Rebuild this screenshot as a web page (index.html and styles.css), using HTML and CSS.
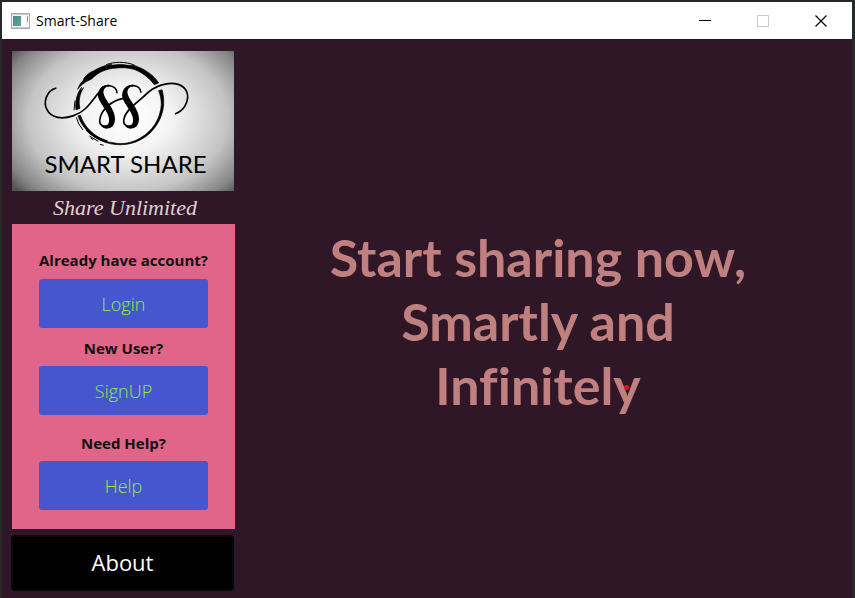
FILE: index.html
```html
<!DOCTYPE html>
<html lang="en">
<head>
<meta charset="utf-8">
<title>Smart-Share</title>
<link rel="stylesheet" href="styles.css">
</head>
<body>
<div class="window">
  <header class="titlebar">
    <svg class="app-icon" width="19" height="16" viewBox="0 0 19 16" aria-hidden="true">
      <defs><linearGradient id="pane" x1="0" y1="0" x2="1" y2="1"><stop offset="0" stop-color="#4584a0"/><stop offset="1" stop-color="#5fae7c"/></linearGradient></defs>
      <rect x=".5" y=".5" width="18" height="15" fill="#f4f5f7" stroke="#a9adb5"/>
      <path d="M1 1.5H18" stroke="#c5c9d2"/>
      <rect x="2" y="3" width="8" height="10" fill="url(#pane)"/>
      <rect x="11" y="3" width="4" height="10" fill="#fff"/>
      <path d="M16.5 3V9" stroke="#63b08d"/>
      <path d="M1 14.5H18" stroke="#c5c9d2"/>
    </svg>
    <span class="title">Smart-Share</span>
    <button class="control" aria-label="Minimize"><svg width="12" height="12" viewBox="0 0 12 12"><path d="M0 5.5H12" stroke="#000"/></svg></button>
    <button class="control" aria-label="Maximize" disabled><svg width="12" height="12" viewBox="0 0 12 12"><rect x=".5" y=".5" width="11" height="11" fill="none" stroke="#ccc"/></svg></button>
    <button class="control" aria-label="Close"><svg width="12" height="12" viewBox="0 0 12 12"><path d="M.5 .5L11.5 11.5M11.5 .5L.5 11.5" stroke="#000" stroke-width="1.2"/></svg></button>
  </header>
  <main class="content">
    <aside class="sidebar">
      <div class="logo">
        <svg class="emblem" viewBox="0 0 222 140" aria-hidden="true">
          <g transform="translate(28 4) scale(.3333)">
            <g fill="#000" stroke="#000" stroke-width="2">
              <path d="M113 103C117 92 122 83 129 77C133 65 145 54 160 48C175 38 195 31 216 27L205 33C220 29 246 27 264 31L285 32C315 42 343 62 356 84L343 89C329 70 309 53 285 44C263 37 243 37 220 40C200 42 178 51 162 65L155 72L141 79C128 86 120 94 113 103Z"/>
              <path d="M125 97C111 115 104 139 108 165L120 160C115 142 118 116 131 98L119 109Z"/>
              <path d="M114 183C126 217 151 241 181 256C220 275 268 273 302 254C340 235 368 193 371 149C372 132 370 117 366 104L356 107C361 119 364 134 364 149C361 193 336 229 301 249C277 263 248 269 225 264L205 261C164 246 135 219 121 181Z"/>
            </g>
            <g fill="none" stroke="#000">
              <path d="M198 29C224 20 254 19 283 30M105 137L102 166M109 187Q114 208 129 225M148 243L175 259M180 268L191 271M152 249L160 254" stroke-width="3"/>
              <path d="M134 75C160 47 205 32 253 33" stroke-width="8"/>
              <path d="M140 224Q165 250 202 260" stroke-width="7"/>
              <path d="M49 99C19 107 9 142 21 164C34 190 67 194 101 182C140 169 155 137 177 112" stroke-width="5"/>
              <path d="M231 115C230 87 190 84 178 110C171 130 193 146 204 160M210 207C200 221 174 213 180 191C184 166 214 136 251 130" stroke-width="5"/>
              <path d="M303 113C302 87 262 84 252 110C245 130 265 146 276 160M282 207C272 221 246 213 252 191C257 163 298 139 317 119C345 91 386 79 415 88C440 96 449 121 439 144C433 162 421 171 405 177" stroke-width="5"/>
            </g>
            <g fill="#000" stroke="#000" stroke-width="4">
              <path id="stem" d="M209 91C191 94 185 105 190 120C196 141 223 162 223 191C223 209 214 219 199 219C191 218 187 214 187 214C205 216 211 207 209 192C207 166 181 148 177 126C174 107 186 90 209 91Z"/>
              <use href="#stem" x="72"/>
            </g>
          </g>
        </svg>
        <span class="brand">SMART SHARE</span>
      </div>
      <p class="tagline">Share Unlimited</p>
      <section class="account">
        <p class="prompt">Already have account?</p>
        <button class="action">Login</button>
        <p class="prompt">New User?</p>
        <button class="action">SignUP</button>
        <p class="prompt prompt-help">Need Help?</p>
        <button class="action">Help</button>
      </section>
      <button class="about">About</button>
    </aside>
    <section class="hero">
      <h1>Start sharing now,<br>Smartly and<br>Infinitel<span class="last">y<i class="dot"></i></span></h1>
    </section>
  </main>
</div>
</body>
</html>
```
FILE: styles.css
```css
* { box-sizing: border-box; }
html { height: 100%; }
body {
  margin: 0;
  min-height: 100%;
  display: flex;
  padding: 2px 3px 0 2px;
  background: #272929;
  font-family: "Open Sans", "Noto Sans", sans-serif;
}
p, h1 { margin: 0; }
button { border: 0; padding: 0; font-family: inherit; }
.window { flex: 1; display: flex; flex-direction: column; background: #2f1728; }
.titlebar { display: flex; align-items: center; height: 37px; background: #fff; padding: 0 2px 0 9px; }
.title { flex: 1; margin-left: 6px; font-size: 14px; color: #000; }
.control { width: 58px; height: 35px; background: none; display: flex; align-items: center; justify-content: center; }
.content { flex: 1; display: flex; padding: 12px 11px 10px 9px; }
.sidebar { width: 224px; display: flex; flex-direction: column; }
.logo {
  position: relative;
  margin: 0 1px;
  aspect-ratio: 222 / 140;
  background: radial-gradient(ellipse 66% 78% at 52% 48%, #fff 0%, #f4f4f4 30%, #c4c4c4 68%, #858585 90%, #555 100%);
}
.emblem { display: block; width: 100%; }
.brand {
  position: absolute;
  inset: auto 0 11px 5px;
  text-align: center;
  white-space: nowrap;
  font: 400 24px/32px Lato, sans-serif;
  color: #000;
}
.tagline {
  padding: 2px 0 1px 4px;
  text-align: center;
  font: italic 22px/30px "Liberation Serif", serif;
  color: #e2cfd2;
}
.account {
  display: flex;
  flex-direction: column;
  align-items: center;
  margin-left: 1px;
  padding: 24px 27px 19px;
  background: #e06588;
}
.prompt { font-size: 15px; font-weight: 700; line-height: 24px; margin-bottom: 7px; white-space: nowrap; color: #111; }
.action {
  width: 100%;
  height: 49px;
  border-radius: 3px;
  background: #4656cf;
  color: #86f238;
  font-size: 18px;
  font-weight: 300;
}
.action + .prompt { margin-top: 8px; margin-bottom: 6px; }
.action + .prompt-help { margin-top: 16px; }
.about {
  height: 56px;
  margin: 6px 1px 0 0;
  padding-bottom: 2px;
  border: 2px solid #080808;
  border-radius: 4px;
  background: #000;
  color: #fff;
  font-size: 22px;
}
.hero { flex: 1; display: flex; align-items: center; justify-content: center; }
.hero h1 { text-align: center; font: 700 52px/64px Lato, sans-serif; font-variant-ligatures: none; color: #c08080; }
.last { position: relative; }
.dot { position: absolute; left: 50%; top: 50%; width: 5px; height: 5px; margin-left: -3px; border-radius: 50%; background: #e81420; }
```
